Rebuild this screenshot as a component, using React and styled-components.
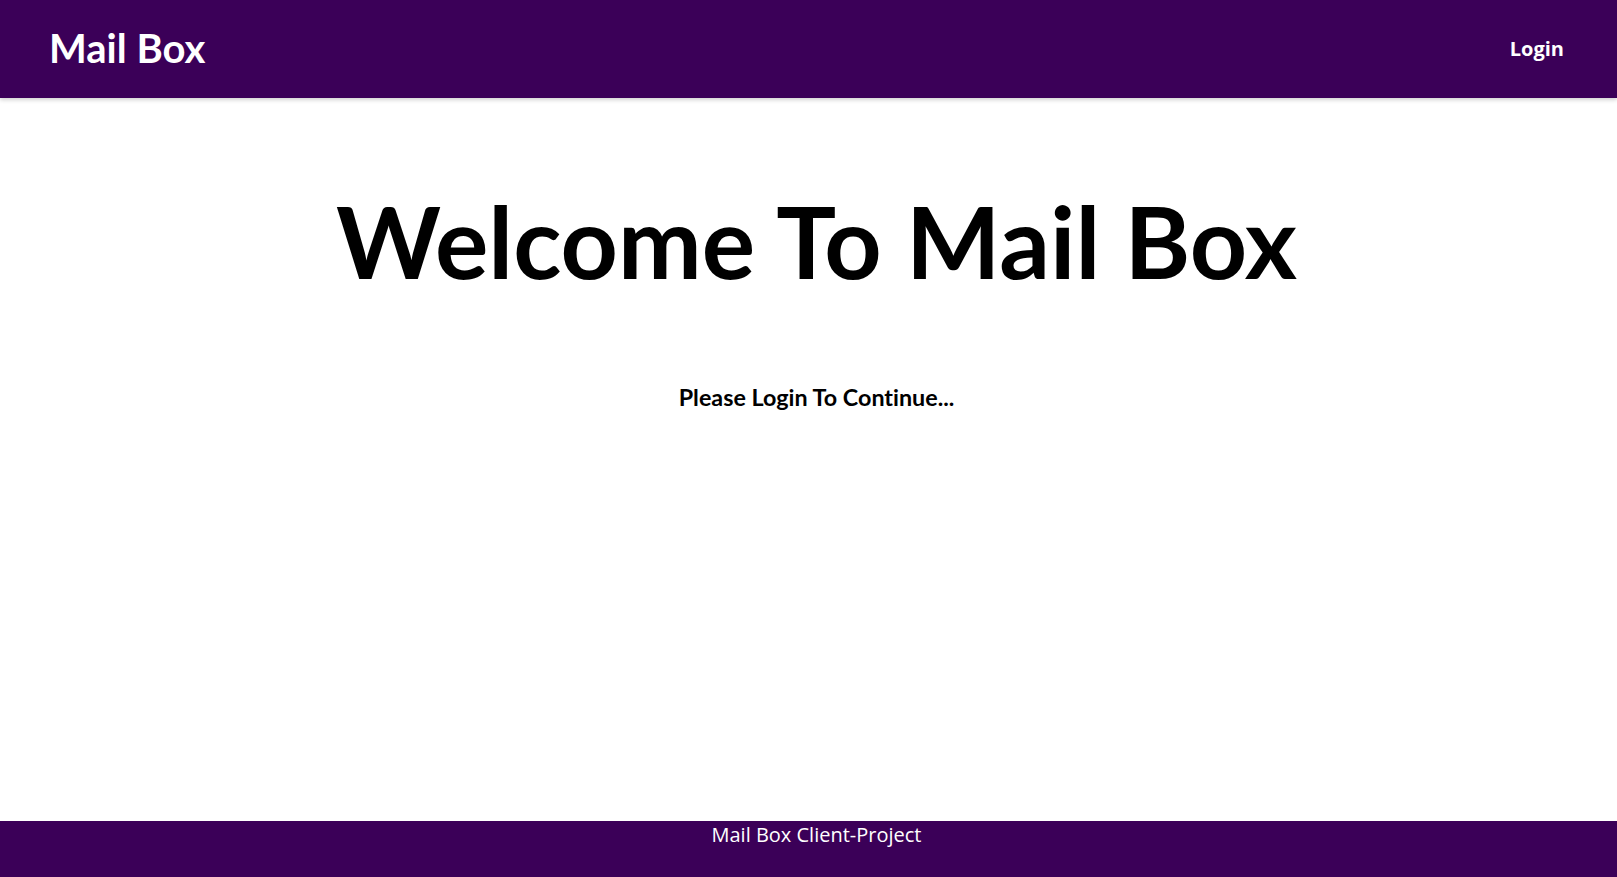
import styled, { createGlobalStyle } from 'styled-components';

const GlobalStyle = createGlobalStyle`
  html, body {
    margin: 0;
    padding: 0;
    background: #fff;
  }
  body {
    font-family: "Lato", "Open Sans", sans-serif;
    font-variant-ligatures: no-common-ligatures;
  }
`;

const Page = styled.div`
  min-height: 100vh;
  display: flex;
  flex-direction: column;
`;

const Header = styled.header`
  height: 98px;
  box-sizing: border-box;
  background: #3b0058;
  display: flex;
  align-items: center;
  justify-content: space-between;
  padding: 0 53px 2px 49px;
  box-shadow: 0 2px 4px rgba(0, 0, 0, 0.18);
  position: relative;
  z-index: 1;
`;

const Brand = styled.h1`
  margin: 0;
  font-family: "Lato", sans-serif;
  font-weight: 700;
  font-size: 40px;
  color: #fff;
`;

const NavLink = styled.a`
  font-family: "Open Sans", sans-serif;
  font-weight: 700;
  font-size: 20px;
  color: #fff;
  text-decoration: none;
  cursor: pointer;
`;

const Main = styled.main`
  flex: 1;
  display: flex;
  flex-direction: column;
  align-items: center;
  padding-left: 16px;
`;

const Title = styled.h2`
  margin: 82px 0 0;
  font-family: "Lato", sans-serif;
  font-weight: 700;
  font-size: 100px;
  color: #000;
`;

const Subtitle = styled.p`
  margin: 83px 0 0;
  font-family: "Lato", sans-serif;
  font-weight: 700;
  font-size: 23.3px;
  color: #000;
`;

const Footer = styled.footer`
  height: 56px;
  background: #3b0058;
  color: #fff;
  text-align: center;
  padding-left: 16px;
  font-family: "Open Sans", sans-serif;
  font-size: 20px;
  line-height: 27px;
`;

const App = () => {
  return (
    <>
      <GlobalStyle />
      <Page>
        <Header>
          <Brand>Mail Box</Brand>
          <NavLink>Login</NavLink>
        </Header>

        <Main>
          <Title>Welcome To Mail Box</Title>
          <Subtitle>Please Login To Continue...</Subtitle>
        </Main>

        <Footer>Mail Box Client-Project</Footer>
      </Page>
    </>
  );
};

export default App;
